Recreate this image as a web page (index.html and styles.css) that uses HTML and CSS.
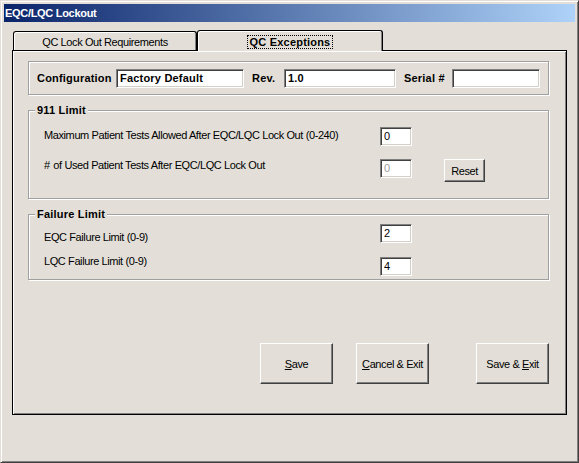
FILE: index.html
```html
<!DOCTYPE html>
<html>
<head>
<meta charset="utf-8">
<title>EQC/LQC Lockout</title>
<link rel="stylesheet" href="styles.css">
</head>
<body>
<div class="window">
  <div class="titlebar">EQC/LQC Lockout</div>
  <div class="tabs">
    <div class="tab">QC Lock Out Requirements</div>
    <div class="tab active"><span class="focus">QC Exceptions</span></div>
  </div>
  <div class="panel">
    <div class="group config">
      <span class="blabel w-config">Configuration</span>
      <div class="field bold w-cfg">Factory Default</div>
      <span class="blabel w-rev">Rev.</span>
      <div class="field bold w-rev-f">1.0</div>
      <span class="blabel w-serial">Serial #</span>
      <div class="field w-serial-f"></div>
    </div>

    <div class="group g911">
      <div class="legend">911 Limit</div>
      <div class="row r-max">
        <span class="lbl">Maximum Patient Tests Allowed After EQC/LQC Lock Out (0-240)</span>
        <div class="field num">0</div>
      </div>
      <div class="row r-used">
        <span class="lbl"><span class="hash">#</span> of Used Patient Tests After EQC/LQC Lock Out</span>
        <div class="field num disabled">0</div>
        <button class="btn reset">Reset</button>
      </div>
    </div>

    <div class="group gfail">
      <div class="legend">Failure Limit</div>
      <div class="row r-eqc">
        <span class="lbl">EQC Failure Limit (0-9)</span>
        <div class="field num">2</div>
      </div>
      <div class="row r-lqc">
        <span class="lbl">LQC Failure Limit (0-9)</span>
        <div class="field num">4</div>
      </div>
    </div>

    <div class="actions">
      <button class="btn big"><u>S</u>ave</button>
      <button class="btn big cancel"><u>C</u>ancel &amp; Exit</button>
      <button class="btn big saveexit">Save &amp; <u>E</u>xit</button>
    </div>
  </div>
</div>
</body>
</html>
```

FILE: styles.css
```css
* { box-sizing: border-box; }
html, body { margin: 0; padding: 0; }
body {
  background: #e3dfd8;
  font-family: "Liberation Sans", Arial, sans-serif;
  font-size: 11px;
  color: #000;
  width: 579px;
  height: 463px;
  overflow: hidden;
}
.window {
  width: 579px;
  height: 463px;
  border: 1px solid;
  border-color: #e3dfd8 #404040 #404040 #e3dfd8;
  box-shadow: inset 1px 1px #fff, inset -1px -1px #808080;
  padding: 3px 3px 0 3px;
}
.titlebar {
  height: 18px;
  background: linear-gradient(to right, #0a246a, #aed2f8);
  color: #fff;
  font-weight: bold;
  line-height: 18px;
  padding-left: 1px;
  letter-spacing: -0.3px;
}
.tabs {
  display: flex;
  align-items: flex-end;
  margin: 8px 0 0 9px;
  height: 20px;
}
.tab {
  width: 184px;
  height: 19px;
  border: 1px solid #000;
  border-bottom: 0;
  border-radius: 3px 3px 0 0;
  box-shadow: inset 1px 1px #fff, inset -1px 0 #808080;
  text-align: center;
  padding-top: 3px;
  letter-spacing: -0.4px;
  line-height: 14px;
  white-space: nowrap;
}
.tab.active {
  width: 186px;
  height: 21px;
  margin-bottom: -1px;
  position: relative;
  z-index: 1;
  background: #e3dfd8;
  padding-top: 4px;
  font-weight: bold;
  letter-spacing: 0.2px;
}
.focus {
  display: inline-block;
  border: 1px dotted #000;
  padding: 0 2px;
  line-height: 12px;
}
.panel {
  width: 555px;
  height: 365px;
  margin-left: 8px;
  border: 1px solid #000;
  box-shadow: inset 1px 1px #fff, inset -1px -1px #808080;
  padding: 10px 0 0 15px;
}
.group {
  width: 521px;
  border: 1px solid #a0a0a0;
  box-shadow: inset 1px 1px #fff, 1px 1px #fff;
}
.config {
  height: 34px;
  display: flex;
  align-items: center;
  padding-left: 8px;
}
.blabel {
  font-weight: bold;
  letter-spacing: 0.2px;
  white-space: nowrap;
}
.w-config { width: 79px; }
.w-rev { width: 32px; }
.w-serial { width: 48px; }
.w-cfg { width: 128px; margin-right: 8px; }
.w-rev-f { width: 112px; margin-right: 8px; }
.w-serial-f { width: 88px; }

.g911 { height: 89px; margin-top: 15px; }
.gfail { height: 66px; margin-top: 15px; }
.legend {
  width: fit-content;
  margin: -7px 0 0 6px;
  padding: 0 2px;
  background: #e3dfd8;
  font-weight: bold;
  letter-spacing: 0.2px;
  line-height: 13px;
}
.row {
  display: flex;
  align-items: flex-start;
  padding-left: 15px;
}
.lbl {
  width: 336px;
  line-height: 13px;
  letter-spacing: -0.4px;
  white-space: nowrap;
}
.hash { margin-right: 1px; }
.r-max { margin-top: 10px; }
.r-max .lbl { margin-top: 2px; }
.r-used { margin-top: 13px; }
.r-eqc { margin-top: 3px; }
.r-eqc .lbl { margin-top: 7px; }
.r-lqc { margin-top: 13px; }
.r-lqc .lbl { margin-top: -2px; }

.field {
  background: #fff;
  border: 1px solid;
  border-color: #808080 #fff #fff #808080;
  box-shadow: inset 1px 1px #404040, inset -1px -1px #d4d0c8;
  height: 19px;
  line-height: 17px;
  padding-left: 3px;
  white-space: nowrap;
  overflow: hidden;
}
.bold { font-weight: bold; letter-spacing: 0.2px; }
.num { width: 32px; }
.disabled { color: #a0a0a0; }

.btn {
  font: inherit;
  letter-spacing: -0.4px;
  color: #000;
  background: #e3dfd8;
  border: 1px solid;
  border-color: #fff #404040 #404040 #fff;
  box-shadow: inset -1px -1px #808080;
  padding: 0;
}
.reset { width: 41px; height: 23px; margin-left: 32px; }
.actions {
  display: flex;
  margin-top: 63px;
  padding-left: 232px;
}
.big { width: 73px; height: 41px; }
.cancel { margin-left: 23px; }
.saveexit { margin-left: 47px; }
```
